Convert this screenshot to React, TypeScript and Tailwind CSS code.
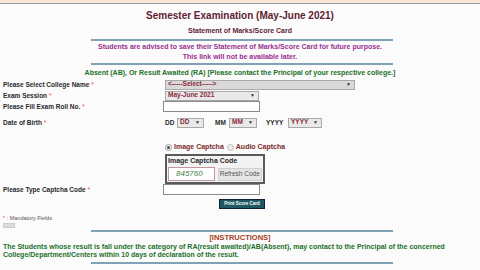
import React from "react";

const Star = () => <span className="text-[#e05050] font-normal"> *</span>;

function FakeSelect({ value, width, grey = false }: { value: string; width: string; grey?: boolean }) {
  return (
    <div
      className={`${width} h-[10px] border border-[#a9a9a9] ${grey ? "bg-[#d9d9d9]" : "bg-[#e9e9e9]"} flex items-center justify-between pl-[2px] pr-[3px]`}
    >
      <span className="text-[6.5px] leading-none font-bold text-[#8a2a3a] whitespace-nowrap">{value}</span>
      <span className="text-[5px] leading-none text-[#333]">▼</span>
    </div>
  );
}

function Row({ label, children, h = "h-[11px]" }: { label: string; children: React.ReactNode; h?: string }) {
  return (
    <div className={`flex items-center ${h}`}>
      <div className="w-[163px] pl-[3px] text-[6.5px] font-bold text-[#2a2a2a] whitespace-nowrap">
        {label}
        <Star />
      </div>
      <div className="flex items-center">{children}</div>
    </div>
  );
}

export default function App() {
  return (
    <div className="w-[480px] h-[270px] overflow-hidden bg-[#fbfbfb] font-['Liberation_Sans',Arial,sans-serif]">
      <div className="h-[4px] bg-[#fbe6d6] border-b border-[#9b9aa8]" />

      {/* heading */}
      <div className="mt-[5px] text-center text-[10px] leading-[14px] font-bold text-[#5e1d34]">
        Semester Examination (May-June 2021)
      </div>
      <div className="mt-[3px] text-center text-[7px] leading-[9px] font-bold text-[#5e1d34]">
        Statement of Marks/Score Card
      </div>
      <div className="ml-[91px] w-[302px] h-[2px] bg-[#7fa2b6] mt-[4px]" />
      <div className="text-center text-[7px] leading-[10px] font-bold text-[#9a2e8e] pt-[1px]">
        <div>Students are advised to save their Statement of Marks/Score Card for future purpose.</div>
        <div>This link will not be available later.</div>
      </div>
      <div className="ml-[91px] w-[302px] h-[2px] bg-[#7fa2b6] mt-[1px]" />
      <div className="mt-[3px] text-center text-[7px] leading-[10px] font-bold text-[#22702a]">
        Absent (AB), Or Result Awaited (RA) [Please contact the Principal of your respective college.]
      </div>

      {/* form */}
      <div className="mt-[1px]">
        <Row label="Please Select College Name">
          <div className="ml-[2px]">
            <FakeSelect value="<-----Select----->" width="w-[190px]" grey />
          </div>
        </Row>
        <Row label="Exam Session">
          <div className="ml-[2px]">
            <FakeSelect value="May-June 2021" width="w-[94px]" />
          </div>
        </Row>
        <Row label="Please Fill Exam Roll No.">
          <div className="w-[97px] h-[11px] border border-[#8a8a8a] bg-white" />
        </Row>
        <div className="h-[5px]" />
        <Row label="Date of Birth">
          <div className="ml-[2px] flex items-center text-[6.5px] font-bold text-[#2a2a2a]">
            <span className="w-[12px]">DD</span>
            <FakeSelect value="DD" width="w-[27px]" />
            <span className="ml-[11px] w-[14px]">MM</span>
            <FakeSelect value="MM" width="w-[28px]" />
            <span className="ml-[9px] w-[22px]">YYYY</span>
            <FakeSelect value="YYYY" width="w-[34px]" />
          </div>
        </Row>

        {/* captcha */}
        <div className="mt-[14px] pl-[165px] flex items-center h-[10px] text-[7px] font-bold text-[#7a2a2a]">
          <span className="w-[7px] h-[7px] rounded-full border border-[#999] bg-white flex items-center justify-center mr-[2px]">
            <span className="w-[3px] h-[3px] rounded-full bg-[#444]" />
          </span>
          <span>Image Captcha</span>
          <span className="ml-[3px] w-[7px] h-[7px] rounded-full border border-[#bbb] bg-[#eee] mr-[2px]" />
          <span>Audio Captcha</span>
        </div>
        <div className="ml-[165px] mt-[2px] w-[100px] h-[30px] border-2 border-[#5a5a5a] bg-[#f3f3f3] px-[1px]">
          <div className="text-[7px] leading-[10px] font-bold text-[#2a2a2a]">Image Captcha Code</div>
          <div className="flex items-center gap-[3px] mt-[1px]">
            <div className="w-[47px] h-[14px] border border-[#c09a9a] bg-white flex items-center pl-[7px] text-[8px] italic text-[#3f7f3f]">
              845760
            </div>
            <div className="w-[45px] h-[13px] bg-[#e4e4e4] border border-[#d0d0d0] flex items-center justify-center text-[6.5px] text-[#555]">
              Refresh Code
            </div>
          </div>
        </div>
        <Row label="Please Type Captcha Code">
          <div className="w-[97px] h-[11px] border border-[#8a8a8a] bg-white" />
        </Row>
        <div className="mt-[4px] ml-[219px] w-[46px] h-[10px] bg-[#1f5864] border border-[#123] flex items-center justify-center text-[4.5px] font-bold text-white whitespace-nowrap">
          Print Score Card
        </div>

        <div className="mt-[5px] pl-[3px] text-[5.5px] leading-[8px] text-[#555]">
          <span className="text-[#e05050]">*</span> : Mandatory Fields
        </div>
        <div className="ml-[3px] mt-[1px] w-[12px] h-[5px] bg-[#dcdcdc] border border-[#ccc]" />
      </div>

      {/* instructions */}
      <div className="ml-[91px] w-[302px] h-[2px] bg-[#7fa2b6] mt-[2px]" />
      <div className="mt-[1px] text-center text-[7.5px] leading-[10px] font-bold text-[#a8401e]">[INSTRUCTIONS]</div>
      <div className="pl-[3px] text-[7px] leading-[8px] font-bold text-[#22702a]">
        <div>
          The Students whose result is fall under the category of RA(result awaited)/AB(Absent), may contact to the Principal of the concerned
        </div>
        <div>College/Department/Centers within 10 days of declaration of the result.</div>
      </div>
      <div className="ml-[91px] w-[302px] h-[2px] bg-[#7fa2b6] mt-[3px]" />
    </div>
  );
}
